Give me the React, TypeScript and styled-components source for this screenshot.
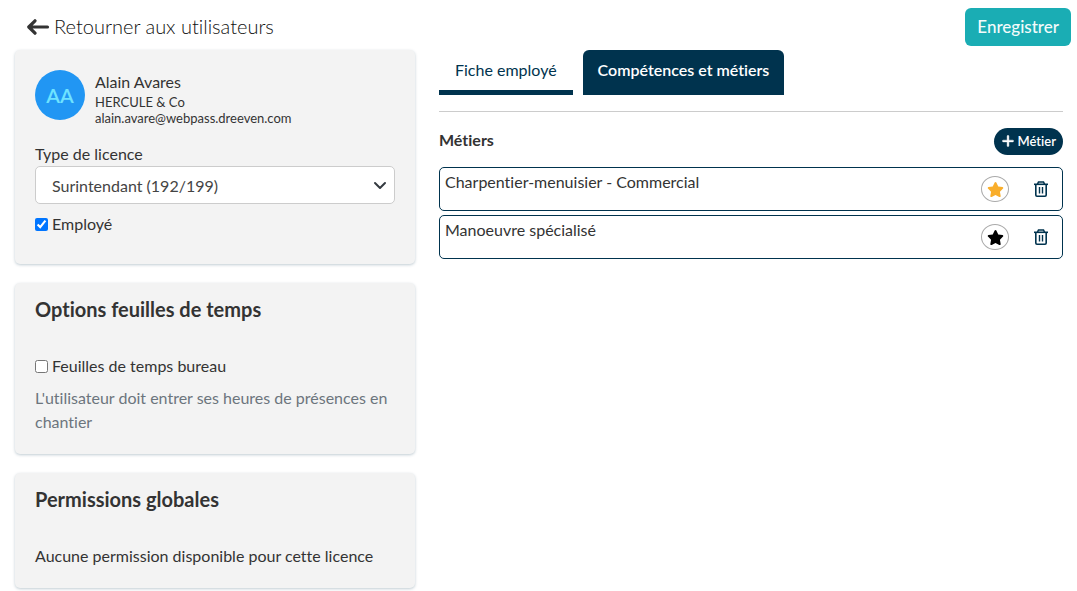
import React, { useState } from 'react';
import styled, { createGlobalStyle } from 'styled-components';
import { FaPlus, FaStar } from 'react-icons/fa6';

const navy = '#00334e';

const GlobalStyle = createGlobalStyle`
  *, *::before, *::after { box-sizing: border-box; }
  body {
    margin: 0;
    background: #fff;
    color: #333;
    font-family: Lato, "Liberation Sans", sans-serif;
    font-size: 16px;
    line-height: 24px;
    font-variant-ligatures: none;
  }
  button, select, input { font: inherit; font-variant-ligatures: none; }
  h1, h2, p { margin: 0; }
`;

const Header = styled.header`
  display: flex;
  align-items: flex-start;
  justify-content: space-between;
  padding: 8px 6px 4px 26px;
`;

const BackLink = styled.a`
  display: flex;
  align-items: center;
  gap: 4px;
  height: 36px;
  color: #111;
  font-size: 20px;
  font-weight: 300;
  text-decoration: none;

  > svg { color: #333; }
`;

const SaveButton = styled.button`
  height: 38px;
  padding: 0 12px;
  border: 0;
  border-radius: 6px;
  background: #1aadb4;
  color: #f3fbfb;
  font-size: 17px;
  font-weight: 500;
`;

const Layout = styled.div`
  display: grid;
  grid-template-columns: 400px minmax(0, 1fr);
  gap: 24px;
  padding: 0 14px 16px 15px;
`;

const Sidebar = styled.aside`
  display: flex;
  flex-direction: column;
  gap: 19px;
`;

const Card = styled.section<{ $profile?: boolean }>`
  padding: ${(p) => (p.$profile ? '20px 20px 28px' : '14px 20px 20px')};
  border-radius: 5px;
  background: #f3f3f3;
  box-shadow: 0 1px 3px rgba(0, 51, 78, 0.25);
`;

const CardTitle = styled.h2`
  margin-bottom: 33px;
  font-size: 20px;
  font-weight: 700;
`;

const Profile = styled.div`
  display: flex;
  gap: 10px;
  margin-bottom: 16px;
`;

const Avatar = styled.div`
  display: flex;
  align-items: center;
  justify-content: center;
  width: 50px;
  height: 50px;
  border-radius: 50%;
  background: #2196f3;
  color: #6fe3ff;
  font-size: 20px;
  font-weight: 600;
`;

const ProfileLine = styled.div<{ $small?: boolean }>`
  font-size: ${(p) => (p.$small ? 13 : 16)}px;
  line-height: ${(p) => (p.$small ? 16 : 24)}px;
`;

const FieldLabel = styled.label`
  display: block;
`;

const SelectWrap = styled.div`
  display: grid;
  align-items: center;
  margin-bottom: 8px;

  > * { grid-area: 1 / 1; }
  > svg {
    justify-self: end;
    margin-right: 7px;
    pointer-events: none;
  }
`;

const Select = styled.select`
  width: 100%;
  height: 38px;
  padding: 2px 36px 0 16px;
  border: 1px solid #ccc;
  border-radius: 5px;
  appearance: none;
  background: #fff;
  color: #444;
`;

const CheckLabel = styled.label`
  display: flex;
  align-items: center;
  gap: 4px;
`;

const Checkbox = styled.input`
  width: 13px;
  height: 13px;
  margin: 0;
`;

const Hint = styled.p`
  margin-top: 8px;
  color: #6c757d;
`;

const Tabs = styled.nav`
  display: flex;
  gap: 10px;
  padding-bottom: 16px;
  border-bottom: 1px solid #ccc;
`;

const Tab = styled.button<{ $active?: boolean }>`
  height: 45px;
  padding: 0 ${(p) => (p.$active ? 15 : 16)}px;
  border: 0;
  border-bottom: 5px solid ${navy};
  border-radius: ${(p) => (p.$active ? '6px 6px 0 0' : '0')};
  background: ${(p) => (p.$active ? navy : 'transparent')};
  color: ${(p) => (p.$active ? '#fff' : navy)};
  font-weight: ${(p) => (p.$active ? 600 : 400)};
`;

const SectionBar = styled.div`
  display: flex;
  align-items: flex-start;
  justify-content: space-between;
  margin: 16px 0 12px;
`;

const SectionTitle = styled.h1`
  font-size: 16px;
  font-weight: 700;
`;

const AddButton = styled.button`
  display: flex;
  align-items: center;
  gap: 3px;
  height: 27px;
  padding: 0 7px 1px;
  border: 0;
  border-radius: 14px;
  background: ${navy};
  color: #fff;
  font-size: 13px;
  font-weight: 600;
`;

const TradeList = styled.ul`
  display: flex;
  flex-direction: column;
  gap: 4px;
  margin: 0;
  padding: 0;
  list-style: none;
`;

const TradeRow = styled.li`
  display: flex;
  align-items: center;
  gap: 24px;
  height: 44px;
  padding: 0 13px 0 5px;
  border: 1px solid ${navy};
  border-radius: 5px;
`;

const TradeName = styled.span`
  flex: 1;
  align-self: flex-start;
  padding-top: 2px;
`;

const StarButton = styled.button<{ $main: boolean }>`
  display: flex;
  align-items: center;
  justify-content: center;
  width: 28px;
  height: 26px;
  padding: 0;
  border: 1px solid #aaa;
  border-radius: 50%;
  background: #fff;
  color: ${(p) => (p.$main ? '#f9ae2b' : '#000')};
`;

const TrashButton = styled.button`
  display: flex;
  padding: 0;
  border: 0;
  background: none;
  color: ${navy};
`;

const BackArrow = () => (
  <svg width="24" height="18" viewBox="0 0 24 18" fill="none" stroke="currentColor" strokeWidth="3.2" strokeLinecap="round" strokeLinejoin="round">
    <path d="M21.500 10H3M9 3.800 2.800 10 9 16.200" />
  </svg>
);

const TrashIcon = () => (
  <svg width="16" height="16" viewBox="0 0 16 16" fill="none" stroke="currentColor" strokeWidth="1.6">
    <path d="M1 3.300h14" strokeWidth="1.600" />
    <path d="M4.500 3 5.500 1h5l1 2M2.800 3.500v10.500q0 1.200 1.200 1.200h8q1.200 0 1.200-1.200V3.500" />
    <path d="M6.500 6v6.500M9.500 6v6.500" strokeWidth="1.400" />
  </svg>
);

const Chevron = () => (
  <svg width="16" height="16" viewBox="0 0 16 16" fill="none" stroke="#343a40" strokeWidth="2" strokeLinecap="round" strokeLinejoin="round">
    <path d="m3 6 5 5 5-5" />
  </svg>
);

const trades = ['Charpentier-menuisier - Commercial', 'Manoeuvre spécialisé'];

export default function App() {
  const [mainTrade, setMainTrade] = useState(0);

  return (
    <>
      <GlobalStyle />
      <Header>
        <BackLink href="#utilisateurs">
          <BackArrow />
          Retourner aux utilisateurs
        </BackLink>
        <SaveButton type="button">Enregistrer</SaveButton>
      </Header>
      <Layout>
        <Sidebar>
          <Card $profile>
            <Profile>
              <Avatar>AA</Avatar>
              <div>
                <ProfileLine>Alain Avares</ProfileLine>
                <ProfileLine $small>HERCULE &amp; Co</ProfileLine>
                <ProfileLine $small>alain.avare@webpass.dreeven.com</ProfileLine>
              </div>
            </Profile>
            <FieldLabel htmlFor="licence">Type de licence</FieldLabel>
            <SelectWrap>
              <Select id="licence">
                <option>Surintendant (192/199)</option>
              </Select>
              <Chevron />
            </SelectWrap>
            <CheckLabel>
              <Checkbox type="checkbox" defaultChecked />
              Employé
            </CheckLabel>
          </Card>
          <Card>
            <CardTitle>Options feuilles de temps</CardTitle>
            <CheckLabel>
              <Checkbox type="checkbox" />
              Feuilles de temps bureau
            </CheckLabel>
            <Hint>L'utilisateur doit entrer ses heures de présences en chantier</Hint>
          </Card>
          <Card>
            <CardTitle>Permissions globales</CardTitle>
            <p>Aucune permission disponible pour cette licence</p>
          </Card>
        </Sidebar>
        <main>
          <Tabs>
            <Tab type="button">Fiche employé</Tab>
            <Tab type="button" $active>Compétences et métiers</Tab>
          </Tabs>
          <SectionBar>
            <SectionTitle>Métiers</SectionTitle>
            <AddButton type="button">
              <FaPlus size={14} strokeWidth={15} stroke="currentColor" />
              Métier
            </AddButton>
          </SectionBar>
          <TradeList>
            {trades.map((name, i) => (
              <TradeRow key={name}>
                <TradeName>{name}</TradeName>
                <StarButton type="button" aria-label="Métier principal" $main={i === mainTrade} onClick={() => setMainTrade(i)}>
                  <FaStar size={17} />
                </StarButton>
                <TrashButton type="button" aria-label="Supprimer">
                  <TrashIcon />
                </TrashButton>
              </TradeRow>
            ))}
          </TradeList>
        </main>
      </Layout>
    </>
  );
}
